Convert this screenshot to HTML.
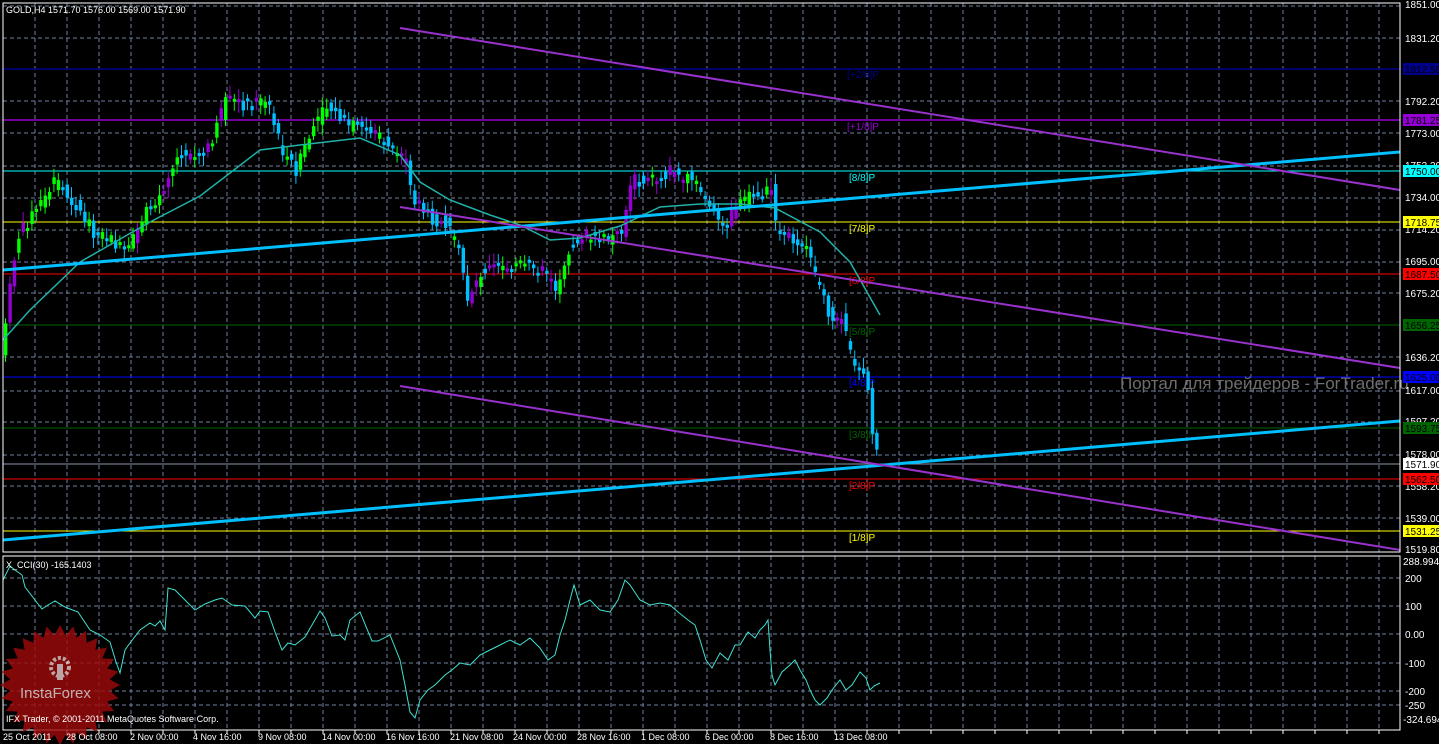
<!DOCTYPE html>
<html><head><meta charset="utf-8"><style>
html,body{margin:0;padding:0;background:#000;width:1439px;height:744px;overflow:hidden}
svg{display:block}
text{font-family:"Liberation Sans",sans-serif}
</style></head><body>
<svg id="s" width="1439" height="744" xmlns="http://www.w3.org/2000/svg">
<rect width="1439" height="744" fill="#000"/>
<g id="grid"></g>
<line x1="3" y1="69" x2="1400" y2="69" stroke="#00008b" stroke-width="1.5"/>
<line x1="3" y1="120" x2="1400" y2="120" stroke="#9400d3" stroke-width="1.5"/>
<line x1="3" y1="171" x2="1400" y2="171" stroke="#00ffff" stroke-width="1"/>
<line x1="3" y1="222" x2="1400" y2="222" stroke="#ffff00" stroke-width="1"/>
<line x1="3" y1="274" x2="1400" y2="274" stroke="#ff0000" stroke-width="1"/>
<line x1="3" y1="325" x2="1400" y2="325" stroke="#006400" stroke-width="1"/>
<line x1="3" y1="377" x2="1400" y2="377" stroke="#0000ff" stroke-width="1"/>
<line x1="3" y1="428" x2="1400" y2="428" stroke="#006400" stroke-width="1"/>
<line x1="3" y1="464" x2="1400" y2="464" stroke="#8a94a8" stroke-width="1"/>
<line x1="3" y1="479" x2="1400" y2="479" stroke="#ff0000" stroke-width="1"/>
<line x1="3" y1="531" x2="1400" y2="531" stroke="#ffff00" stroke-width="1"/>
<g font-size="10">
<text x="847" y="78" fill="#00008b">[+2/8]P</text>
<text x="847" y="130" fill="#9400d3">[+1/8]P</text>
<text x="849" y="181" fill="#00ffff">[8/8]P</text>
<text x="849" y="232" fill="#ffff00">[7/8]P</text>
<text x="849" y="284" fill="#ff0000">[6/8]P</text>
<text x="849" y="335" fill="#006400">[5/8]P</text>
<text x="849" y="386" fill="#0000ff">[4/8]P</text>
<text x="849" y="438" fill="#006400">[3/8]P</text>
<text x="849" y="489" fill="#ff0000">[2/8]P</text>
<text x="849" y="541" fill="#ffff00">[1/8]P</text>
</g>
<text x="1120" y="389" fill="#6e6e6e" font-size="17">Портал для трейдеров - ForTrader.ru</text>
<g id="candles"></g>
<polyline fill="none" stroke="#20b2aa" stroke-width="1.5" points="3,340 30,310 80,262 150,222 200,196 260,150 300,145 360,138 400,155 420,182 450,200 490,215 520,225 550,240 580,238 620,226 660,207 700,204 740,204 775,208 820,232 850,262 880,315"/>
<line x1="3" y1="270" x2="1400" y2="152" stroke="#00bfff" stroke-width="3"/>
<line x1="3" y1="540" x2="1400" y2="421" stroke="#00bfff" stroke-width="3"/>
<line x1="400" y1="28" x2="1400" y2="190" stroke="#9932cc" stroke-width="2"/>
<line x1="400" y1="207" x2="1400" y2="368" stroke="#9932cc" stroke-width="2"/>
<line x1="400" y1="386" x2="1400" y2="550" stroke="#9932cc" stroke-width="2"/>
<polyline fill="none" stroke="#40e0d0" stroke-width="1" points="3,580 10,566 15,570 22,575 25,587 35,600 42,609 48,605 55,601 65,607 78,612 90,630 100,635 110,642 116,662 120,673 125,650 130,643 140,630 150,623 155,626 160,621 165,630 168,588 175,590 185,600 195,610 205,604 215,600 222,598 232,605 245,606 255,618 260,611 268,612 275,632 282,650 288,643 295,645 305,637 312,625 320,611 325,618 332,636 340,635 345,640 350,620 360,612 372,641 378,641 390,635 400,660 405,685 410,712 415,718 420,700 428,690 435,685 445,675 452,670 460,663 470,665 480,655 490,650 500,645 510,640 520,645 530,638 540,648 548,660 555,655 560,635 565,620 570,600 574,585 580,605 590,600 600,610 610,612 618,600 625,580 630,585 640,600 650,605 660,603 670,605 678,612 688,620 695,625 700,640 706,660 712,668 720,653 728,660 735,645 740,645 748,632 755,638 760,630 765,625 768,620 770,650 772,675 775,685 782,672 790,665 795,660 800,670 806,680 810,690 815,700 820,705 827,698 832,690 840,680 846,690 852,685 860,672 866,678 870,690 874,686 880,683"/>
<rect x="3" y="3" width="1397" height="549" fill="none" stroke="#fff" stroke-width="1"/>
<rect x="3" y="556" width="1397" height="174" fill="none" stroke="#fff" stroke-width="1"/>
<g font-size="10" fill="#fff">
<text x="1405" y="8">1851.00</text>
<text x="1405" y="42">1831.20</text>
<text x="1405" y="105">1792.20</text>
<text x="1405" y="137">1773.00</text>
<text x="1405" y="169">1753.20</text>
<text x="1405" y="201">1734.00</text>
<text x="1405" y="233">1714.20</text>
<text x="1405" y="265">1695.00</text>
<text x="1405" y="297">1675.20</text>
<text x="1405" y="361">1636.20</text>
<text x="1405" y="394">1617.00</text>
<text x="1405" y="425">1597.20</text>
<text x="1405" y="458">1578.00</text>
<text x="1405" y="490">1558.20</text>
<text x="1405" y="522">1539.00</text>
<text x="1405" y="553">1519.80</text>
<text x="1403" y="565">288.994</text>
<text x="1405" y="582">200</text>
<text x="1405" y="610">100</text>
<text x="1405" y="638">0.00</text>
<text x="1405" y="667">-100</text>
<text x="1405" y="695">-200</text>
<text x="1405" y="709">-250</text>
<text x="1403" y="723">-324.694</text>
</g>
<g font-size="10">
<rect x="1403" y="63" width="36" height="12" fill="#00008b"/><text x="1405" y="73" fill="#000">1812.50</text>
<rect x="1403" y="114" width="36" height="12" fill="#9400d3"/><text x="1405" y="124" fill="#000">1781.25</text>
<rect x="1403" y="165" width="36" height="12" fill="#00ffff"/><text x="1405" y="175" fill="#000">1750.00</text>
<rect x="1403" y="216" width="36" height="12" fill="#ffff00"/><text x="1405" y="226" fill="#000">1718.75</text>
<rect x="1403" y="268" width="36" height="12" fill="#ff0000"/><text x="1405" y="278" fill="#000">1687.50</text>
<rect x="1403" y="319" width="36" height="12" fill="#006400"/><text x="1405" y="329" fill="#000">1656.25</text>
<rect x="1403" y="371" width="36" height="12" fill="#0000ff"/><text x="1405" y="381" fill="#000">1625.00</text>
<rect x="1403" y="422" width="36" height="12" fill="#006400"/><text x="1405" y="432" fill="#000">1593.75</text>
<rect x="1403" y="458" width="36" height="12" fill="#fff"/><text x="1405" y="468" fill="#000">1571.90</text>
<rect x="1403" y="473" width="36" height="12" fill="#ff0000"/><text x="1405" y="483" fill="#000">1562.50</text>
<rect x="1403" y="525" width="36" height="12" fill="#ffff00"/><text x="1405" y="535" fill="#000">1531.25</text>
</g>
<g opacity="0.8">
<polygon id="star" fill="#a00a0a"/>
<g fill="#fff" opacity="0.8">
<circle cx="60" cy="667" r="9" fill="none" stroke="#fff" stroke-width="4" stroke-dasharray="3 2"/>
<rect x="57" y="664" width="6" height="16"/>
</g>
<text x="20" y="698" fill="#fff" font-size="15" opacity="0.85">InstaForex</text>
</g>
<text x="6" y="13" fill="#fff" font-size="9">GOLD,H4  1571.70 1576.00 1569.00 1571.90</text>
<text x="6" y="568" fill="#fff" font-size="9">X_CCI(30) -165.1403</text>
<text x="6" y="722" fill="#fff" font-size="9">IFX Trader, © 2001-2011 MetaQuotes Software Corp.</text>
<g font-size="9" fill="#fff">
<text x="3" y="740">25 Oct 2011</text>
<text x="66" y="740">28 Oct 08:00</text>
<text x="130" y="740">2 Nov 00:00</text>
<text x="193" y="740">4 Nov 16:00</text>
<text x="258" y="740">9 Nov 08:00</text>
<text x="322" y="740">14 Nov 00:00</text>
<text x="386" y="740">16 Nov 16:00</text>
<text x="450" y="740">21 Nov 08:00</text>
<text x="513" y="740">24 Nov 00:00</text>
<text x="577" y="740">28 Nov 16:00</text>
<text x="641" y="740">1 Dec 08:00</text>
<text x="705" y="740">6 Dec 00:00</text>
<text x="770" y="740">8 Dec 16:00</text>
<text x="834" y="740">13 Dec 08:00</text>
</g>
</svg>
<script>
(function(){
var NS="http://www.w3.org/2000/svg";
function el(p,t,a){var e=document.createElementNS(NS,t);for(var k in a)e.setAttribute(k,a[k]);p.appendChild(e);return e;}
var g=document.getElementById("grid");
for(var x=35;x<1400;x+=32){el(g,"line",{x1:x,y1:3,x2:x,y2:552,stroke:"#7080a0","stroke-dasharray":"4 3"});el(g,"line",{x1:x,y1:556,x2:x,y2:730,stroke:"#7080a0","stroke-dasharray":"4 3"});el(g,"line",{x1:x,y1:730,x2:x,y2:734,stroke:"#fff"});}
[6,38,101,133,166,198,230,262,293,357,391,422,455,486,518].forEach(function(y){el(g,"line",{x1:3,y1:y,x2:1400,y2:y,stroke:"#7080a0","stroke-dasharray":"4 3"});});
[578,606,634,663,691,705].forEach(function(y){el(g,"line",{x1:3,y1:y,x2:1400,y2:y,stroke:"#7080a0","stroke-dasharray":"4 3"});});
var kp=[[3,330],[15,240],[30,215],[55,180],[70,200],[90,230],[110,240],[125,255],[140,220],[160,190],[175,155],[195,160],[210,140],[225,100],[245,105],[265,100],[280,150],[295,170],[310,130],[325,105],[345,125],[370,130],[390,150],[405,165],[410,195],[425,215],[445,225],[460,260],[465,300],[480,270],[500,265],[520,265],[540,270],[555,290],[565,250],[580,235],[600,240],[620,235],[630,180],[650,180],[670,172],[690,180],[705,200],[720,230],[735,205],[755,195],[770,190],[775,235],[800,240],[815,280],[825,310],[840,320],[850,360],[865,370],[870,430],[878,463]];
function f(xx){for(var i=1;i<kp.length;i++){if(xx<=kp[i][0]){var a=kp[i-1],b=kp[i];return a[1]+(b[1]-a[1])*(xx-a[0])/(b[0]-a[0]);}}return 463;}
var c=document.getElementById("candles");var seed=7;function r(){seed=(seed*9301+49297)%233280;return seed/233280;}
var cols=["#00ff00","#00bfff","#9400d3"];
for(var cx=4;cx<=878;cx+=4.4){var o=f(cx-4.4)+(r()-0.5)*14,cl=f(cx)+(r()-0.5)*14;var ty=Math.min(o,cl),h=Math.max(Math.abs(o-cl),3);
var col=cols[cl<o?(r()<0.6?0:2):1];
el(c,"line",{x1:cx+1.5,y1:ty-3-r()*8,x2:cx+1.5,y2:ty+h+3+r()*8,stroke:col});
el(c,"rect",{x:cx,y:ty,width:3.4,height:h,fill:col});}
var pts=[],n=28;for(var i=0;i<n*2;i++){var a=i*Math.PI/n,R=i%2?50:60;pts.push((60+R*Math.sin(a)).toFixed(1)+","+(685-R*Math.cos(a)).toFixed(1));}
document.getElementById("star").setAttribute("points",pts.join(" "));
})();
</script>
</body></html>
